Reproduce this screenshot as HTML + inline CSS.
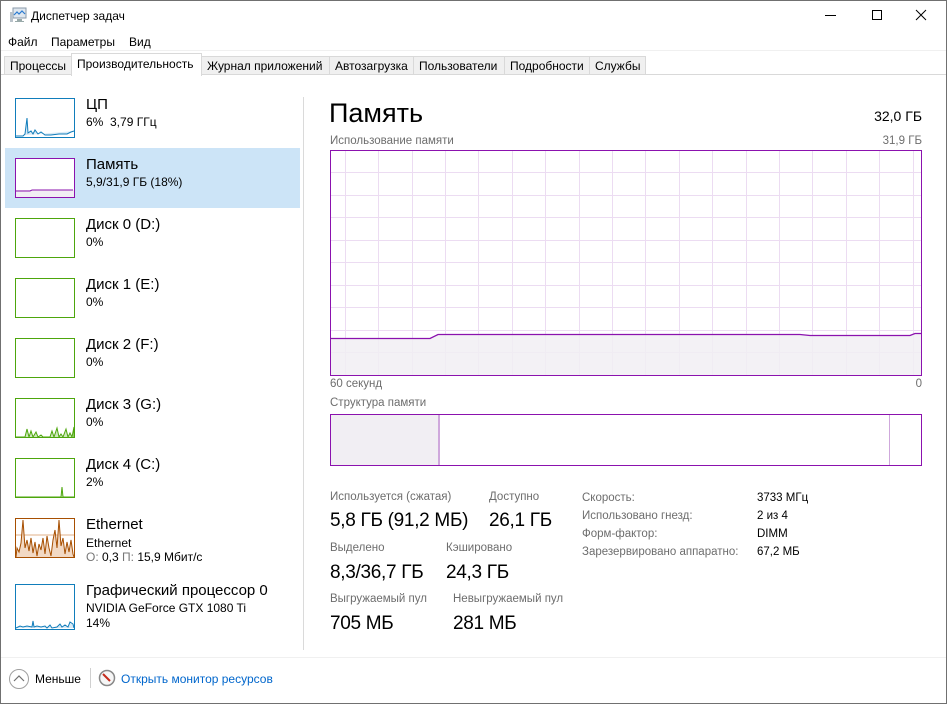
<!DOCTYPE html>
<html><head><meta charset="utf-8"><style>
*{margin:0;padding:0;box-sizing:border-box}
body{width:947px;height:704px;overflow:hidden;background:#fff;font-family:"Segoe UI","Liberation Sans","DejaVu Sans",sans-serif;color:#000;position:relative}
.a{position:absolute;white-space:nowrap}
.s12{font-size:12px}
.tab{position:absolute;top:56px;height:19px;border:1px solid #d9d9d9;background:#f0f0f0;font-size:12px;padding:2px 0 0 5px}
.th{position:absolute;left:15px;width:60px;height:40px;background:#fff}
.big{font-size:15px}
.gr{color:#6d6d6d;font-size:11.5px}
.val{font-size:19px;letter-spacing:-0.3px}
</style></head><body>
<div class="a" style="left:0;top:0;width:947px;height:704px;border:1px solid #707070"></div>
<svg class="a" style="left:9px;top:7px" width="18" height="17" viewBox="0 0 18 17"><rect x="4" y="1" width="13" height="10" fill="#dfe7ef" stroke="#8a9aa8"/><polyline points="5,8 8,5 10,7 13,4 16,7" fill="none" stroke="#2a7ad0" stroke-width="1.2"/><rect x="1" y="5" width="3" height="10" fill="#b9c2ca"/><rect x="8" y="12" width="5" height="2" fill="#9aa"/><rect x="6" y="14" width="9" height="1" fill="#9aa"/></svg>
<div class="a s12" style="left:31px;top:9px">Диспетчер задач</div>
<div class="a" style="left:825px;top:15px;width:11px;height:1px;background:#000"></div>
<div class="a" style="left:872px;top:10px;width:10px;height:10px;border:1px solid #000"></div>
<svg class="a" style="left:915px;top:9px" width="12" height="12"><path d="M1 1L11 11M11 1L1 11" stroke="#000" stroke-width="1"/></svg>
<div class="a s12" style="left:8px;top:35px">Файл</div>
<div class="a s12" style="left:51px;top:35px">Параметры</div>
<div class="a s12" style="left:129px;top:35px">Вид</div>
<div class="a" style="left:1px;top:50px;width:945px;height:1px;background:#f0f0f0"></div>
<div class="a" style="left:1px;top:74px;width:945px;height:1px;background:#d9d9d9"></div>
<div class="tab" style="left:4px;width:69px">Процессы</div>
<div class="tab" style="left:201px;width:129px">Журнал приложений</div>
<div class="tab" style="left:329px;width:85px">Автозагрузка</div>
<div class="tab" style="left:413px;width:92px">Пользователи</div>
<div class="tab" style="left:504px;width:86px">Подробности</div>
<div class="tab" style="left:589px;width:57px">Службы</div>
<div class="tab" style="left:71px;top:53px;height:23px;width:131px;background:#fff;border-bottom:none;padding-top:3px">Производительность</div>
<div class="a" style="left:5px;top:148px;width:295px;height:60px;background:#cce4f7"></div>
<div class="a" style="left:303px;top:97px;width:1px;height:553px;background:#dadada"></div>

<svg class="a" style="left:15px;top:98px" width="60" height="40"><rect x="0.5" y="0.5" width="59" height="39" fill="#fff" stroke="#117dbb"/><polyline points="1,38 8,38 10,36 12,20 13,35 16,33 18,36 20,32 23,36 26,34 30,37 36,37 44,36 52,36 56,34 59,33" fill="#d9eaf6" stroke="#117dbb"/></svg>
<div class="a big" style="left:86px;top:96px">ЦП</div>
<div class="a s12" style="left:86px;top:115px">6%&nbsp; 3,79 ГГц</div>

<svg class="a" style="left:15px;top:158px" width="60" height="40"><rect x="0.5" y="0.5" width="59" height="39" fill="#fff" stroke="#8b12ae"/><rect x="1" y="32" width="58" height="7" fill="#f1eef3"/><polyline points="1,33 15,33 17,32 58,32" fill="none" stroke="#8b12ae"/></svg>
<div class="a big" style="left:86px;top:156px">Память</div>
<div class="a s12" style="left:86px;top:175px">5,9/31,9 ГБ (18%)</div>

<div class="th" style="top:218px;border:1px solid #4da60c"></div>
<div class="a big" style="left:86px;top:216px">Диск 0 (D:)</div>
<div class="a s12" style="left:86px;top:235px">0%</div>
<div class="th" style="top:278px;border:1px solid #4da60c"></div>
<div class="a big" style="left:86px;top:276px">Диск 1 (E:)</div>
<div class="a s12" style="left:86px;top:295px">0%</div>
<div class="th" style="top:338px;border:1px solid #4da60c"></div>
<div class="a big" style="left:86px;top:336px">Диск 2 (F:)</div>
<div class="a s12" style="left:86px;top:355px">0%</div>

<svg class="a" style="left:15px;top:398px" width="60" height="40"><rect x="0.5" y="0.5" width="59" height="39" fill="#fff" stroke="#4da60c"/><polyline points="1,39 10,39 12,31 14,39 16,33 18,39 21,34 23,39 26,37 28,39 35,39 37,33 39,39 42,30 44,39 46,36 48,39 51,31 53,39 55,35 57,39 59,29 59,39" fill="#cfe8bd" stroke="#4da60c"/></svg>
<div class="a big" style="left:86px;top:396px">Диск 3 (G:)</div>
<div class="a s12" style="left:86px;top:415px">0%</div>
<svg class="a" style="left:15px;top:458px" width="60" height="40"><rect x="0.5" y="0.5" width="59" height="39" fill="#fff" stroke="#4da60c"/><polyline points="1,39 46,39 47,29 48,39 59,39" fill="#cfe8bd" stroke="#4da60c"/></svg>
<div class="a big" style="left:86px;top:456px">Диск 4 (C:)</div>
<div class="a s12" style="left:86px;top:475px">2%</div>

<svg class="a" style="left:15px;top:518px" width="60" height="40"><rect x="0.5" y="0.5" width="59" height="39" fill="#fff" stroke="#a74f01"/><line x1="1" y1="17" x2="59" y2="17" stroke="#e0b089"/><polyline points="1,39 2,30 4,34 6,25 8,2 10,30 12,22 14,33 16,20 18,35 20,24 22,38 24,26 26,32 28,20 30,36 32,18 34,30 36,38 38,22 40,12 42,30 44,2 46,28 48,20 50,36 52,24 54,34 56,22 58,36 59,39" fill="#f2d9c4" stroke="#a74f01"/></svg>
<div class="a big" style="left:86px;top:516px">Ethernet</div>
<div class="a s12" style="left:86px;top:536px">Ethernet</div>
<div class="a s12" style="left:86px;top:550px"><span style="color:#777">О:</span> 0,3 <span style="color:#777">П:</span> 15,9 Мбит/с</div>

<svg class="a" style="left:15px;top:584px" width="60" height="46"><rect x="0.5" y="0.5" width="59" height="45" fill="#fff" stroke="#117dbb"/><polyline points="1,44 5,42 8,43 12,42 17,43 18,37 19,43 22,42 26,43 30,42 32,44 35,41 37,44 42,43 45,40 47,43 50,41 53,43 55,38 58,40 59,44" fill="#d9eaf6" stroke="#117dbb"/></svg>
<div class="a big" style="left:86px;top:582px">Графический процессор 0</div>
<div class="a s12" style="left:86px;top:601px">NVIDIA GeForce GTX 1080 Ti</div>
<div class="a s12" style="left:86px;top:616px">14%</div>

<div class="a" style="left:329px;top:96px;font-size:27px;line-height:34px">Память</div>
<div class="a" style="right:25px;top:108px;font-size:14px">32,0 ГБ</div>
<div class="a gr" style="left:330px;top:135px">Использование памяти</div>
<div class="a gr" style="right:25px;top:135px">31,9 ГБ</div>
<svg class="a" style="left:330px;top:150px" width="592" height="226">
<g stroke="#ecdcf2" stroke-width="1">
<line x1="15.5" y1="0" x2="15.5" y2="226"/><line x1="48.5" y1="0" x2="48.5" y2="226"/><line x1="82.5" y1="0" x2="82.5" y2="226"/><line x1="115.5" y1="0" x2="115.5" y2="226"/><line x1="148.5" y1="0" x2="148.5" y2="226"/><line x1="182.5" y1="0" x2="182.5" y2="226"/><line x1="215.5" y1="0" x2="215.5" y2="226"/><line x1="249.5" y1="0" x2="249.5" y2="226"/><line x1="282.5" y1="0" x2="282.5" y2="226"/><line x1="315.5" y1="0" x2="315.5" y2="226"/><line x1="349.5" y1="0" x2="349.5" y2="226"/><line x1="382.5" y1="0" x2="382.5" y2="226"/><line x1="416.5" y1="0" x2="416.5" y2="226"/><line x1="449.5" y1="0" x2="449.5" y2="226"/><line x1="482.5" y1="0" x2="482.5" y2="226"/><line x1="516.5" y1="0" x2="516.5" y2="226"/><line x1="549.5" y1="0" x2="549.5" y2="226"/><line x1="583.5" y1="0" x2="583.5" y2="226"/>
<line x1="0" y1="22.5" x2="592" y2="22.5"/><line x1="0" y1="45.5" x2="592" y2="45.5"/><line x1="0" y1="67.5" x2="592" y2="67.5"/><line x1="0" y1="90.5" x2="592" y2="90.5"/><line x1="0" y1="112.5" x2="592" y2="112.5"/><line x1="0" y1="135.5" x2="592" y2="135.5"/><line x1="0" y1="157.5" x2="592" y2="157.5"/><line x1="0" y1="180.5" x2="592" y2="180.5"/><line x1="0" y1="202.5" x2="592" y2="202.5"/>
</g>
<polygon points="1,188.5 100,188.5 108,184.5 470,184.5 480,185.5 580,185.5 585,183.5 591,183.5 591,225 1,225" fill="#f1eef3" fill-opacity="0.85"/>
<polyline points="1,188.5 100,188.5 108,184.5 470,184.5 480,185.5 580,185.5 585,183.5 591,183.5" fill="none" stroke="#8b12ae" stroke-width="1.3"/>
<rect x="0.5" y="0.5" width="591" height="225" fill="none" stroke="#8b12ae"/>
</svg>
<div class="a gr" style="left:330px;top:378px">60 секунд</div>
<div class="a gr" style="right:25px;top:378px">0</div>
<div class="a gr" style="left:330px;top:397px">Структура памяти</div>
<svg class="a" style="left:330px;top:414px" width="592" height="52"><rect x="1" y="1" width="107" height="50" fill="#f1eef3"/><line x1="109" y1="1" x2="109" y2="51" stroke="#cfa8dc" stroke-width="2"/><line x1="559.5" y1="1" x2="559.5" y2="51" stroke="#cfa8dc"/><rect x="0.5" y="0.5" width="591" height="51" fill="none" stroke="#8b12ae"/></svg>

<div class="a gr" style="left:330px;top:491px">Используется (сжатая)</div>
<div class="a val" style="left:330px;top:510px">5,8 ГБ (91,2 МБ)</div>
<div class="a gr" style="left:489px;top:491px">Доступно</div>
<div class="a val" style="left:489px;top:510px">26,1 ГБ</div>
<div class="a gr" style="left:330px;top:542px">Выделено</div>
<div class="a val" style="left:330px;top:562px">8,3/36,7 ГБ</div>
<div class="a gr" style="left:446px;top:542px">Кэшировано</div>
<div class="a val" style="left:446px;top:562px">24,3 ГБ</div>
<div class="a gr" style="left:330px;top:593px">Выгружаемый пул</div>
<div class="a val" style="left:330px;top:613px">705 МБ</div>
<div class="a gr" style="left:453px;top:593px">Невыгружаемый пул</div>
<div class="a val" style="left:453px;top:613px">281 МБ</div>

<div class="a gr" style="left:582px;top:489px;line-height:18px">Скорость:<br>Использовано гнезд:<br>Форм-фактор:<br>Зарезервировано аппаратно:</div>
<div class="a" style="left:757px;top:489px;font-size:11.5px;line-height:18px">3733 МГц<br>2 из 4<br>DIMM<br>67,2 МБ</div>

<div class="a" style="left:1px;top:657px;width:945px;height:1px;background:#f0f0f0"></div>
<svg class="a" style="left:8px;top:668px" width="22" height="22"><circle cx="11" cy="11" r="9.5" fill="#fff" stroke="#a0a0a0"/><polyline points="6,13 11,8 16,13" fill="none" stroke="#707070" stroke-width="1.2"/></svg>
<div class="a s12" style="left:35px;top:672px">Меньше</div>
<div class="a" style="left:90px;top:668px;width:1px;height:20px;background:#d0d0d0"></div>
<svg class="a" style="left:98px;top:669px" width="18" height="18"><circle cx="9" cy="9" r="7.5" fill="#f6f6f6" stroke="#888" stroke-width="1.5"/><path d="M5 5L12 12" stroke="#c42b1c" stroke-width="2"/></svg>
<div class="a s12" style="left:121px;top:672px;color:#0066cc">Открыть монитор ресурсов</div>
</body></html>
